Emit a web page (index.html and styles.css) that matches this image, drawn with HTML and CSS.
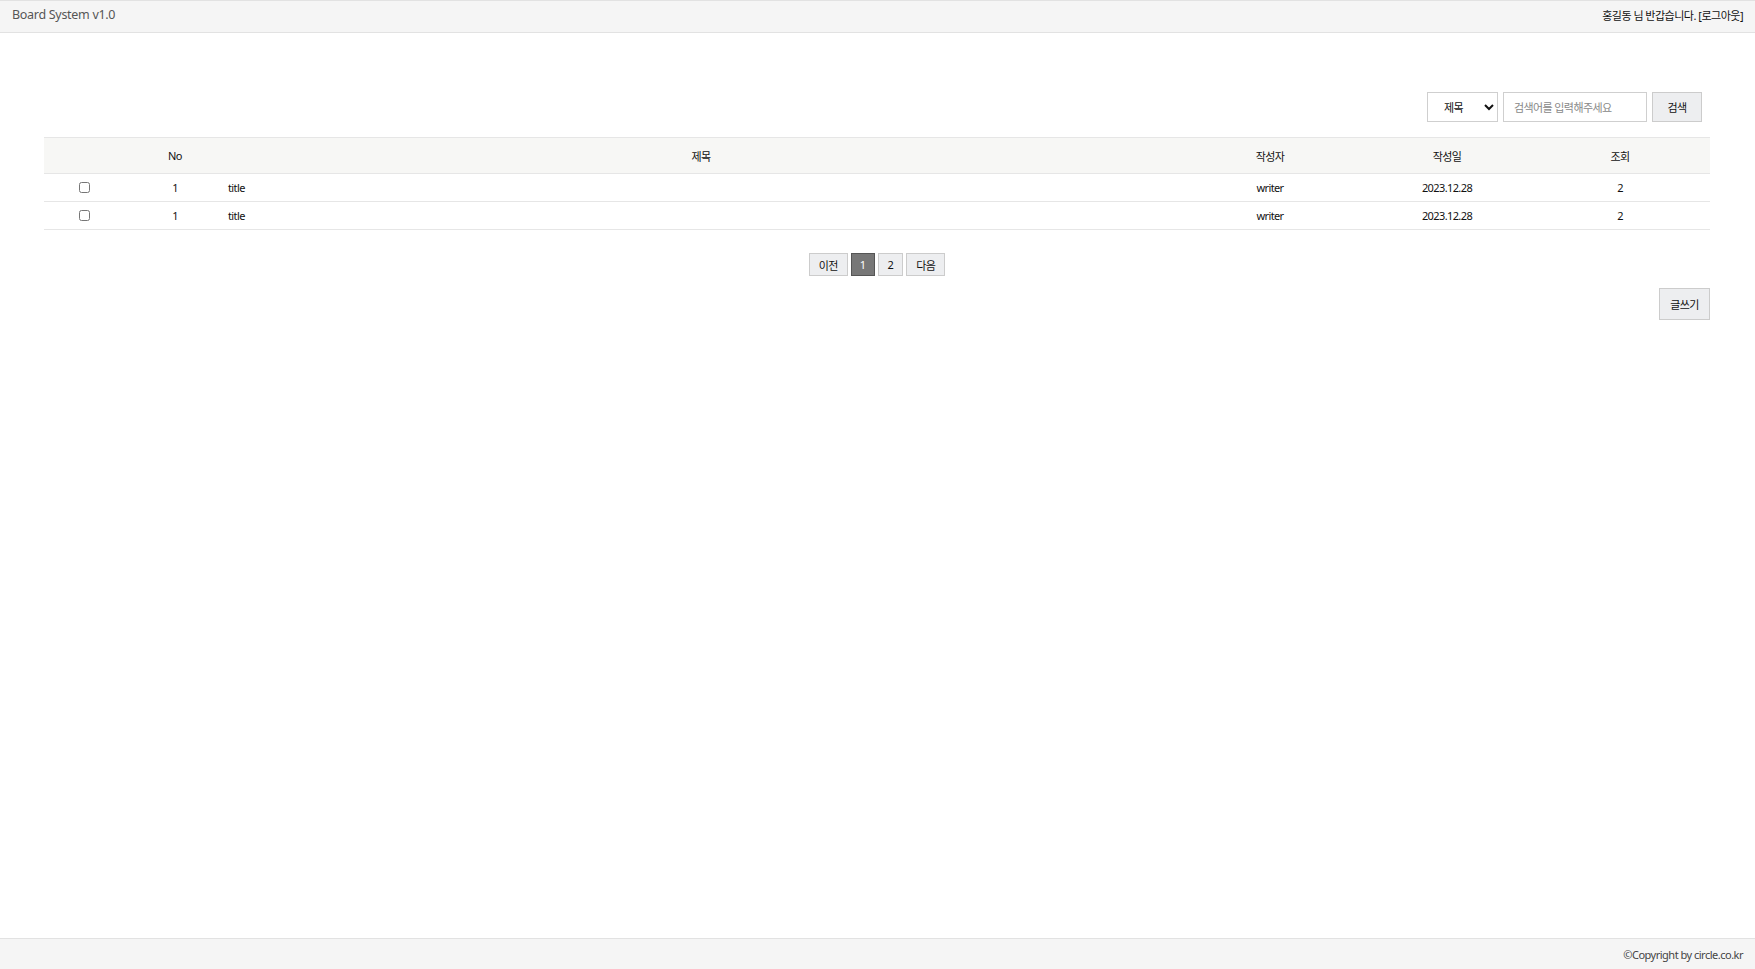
FILE: index.html
```html
<!DOCTYPE html>
<html lang="ko">
<head>
<meta charset="utf-8">
<title>Board System v1.0</title>
<link rel="stylesheet" href="styles.css">
</head>
<body>
<div class="page">
  <header class="topbar">
    <div class="brand">Board System v1.0</div>
    <div class="user">홍길동 님 반갑습니다. <a class="logout">[로그아웃]</a></div>
  </header>
  <main class="content">
    <form class="search">
      <div class="select-wrap">
        <select class="search-select">
          <option>제목</option>
        </select>
      </div>
      <input class="search-input" type="text" placeholder="검색어를 입력해주세요">
      <button class="btn search-btn" type="button">검색</button>
    </form>
    <table class="board">
      <colgroup>
        <col class="c-check"><col class="c-no"><col class="c-title"><col class="c-writer"><col class="c-date"><col class="c-hit">
      </colgroup>
      <thead>
        <tr><th></th><th>No</th><th>제목</th><th>작성자</th><th>작성일</th><th>조회</th></tr>
      </thead>
      <tbody>
        <tr><td><input type="checkbox" class="chk"></td><td>1</td><td class="t-title">title</td><td>writer</td><td>2023.12.28</td><td>2</td></tr>
        <tr><td><input type="checkbox" class="chk"></td><td>1</td><td class="t-title">title</td><td>writer</td><td>2023.12.28</td><td>2</td></tr>
      </tbody>
    </table>
    <nav class="pager">
      <a class="pg">이전</a>
      <a class="pg active">1</a>
      <a class="pg">2</a>
      <a class="pg">다음</a>
    </nav>
    <div class="actions">
      <button class="btn write-btn" type="button">글쓰기</button>
    </div>
  </main>
  <footer class="footer">©Copyright by circle.co.kr</footer>
</div>
</body>
</html>
```

FILE: styles.css
```css
* { box-sizing: border-box; }
html, body { margin: 0; padding: 0; }
body {
  font-family: "Noto Sans", "Noto Sans CJK KR", sans-serif;
  font-size: 11px;
  letter-spacing: -0.6px;
  color: #111;
  background: #fff;
}
.page {
  min-height: 100vh;
  display: flex;
  flex-direction: column;
}
.topbar {
  height: 33px;
  background: #f5f5f5;
  border-top: 1px solid #e2e2e2;
  border-bottom: 1px solid #e2e2e2;
  display: flex;
  align-items: center;
  justify-content: space-between;
  padding: 0 12px 0 12px;
}
.brand {
  font-size: 12.5px;
  letter-spacing: -0.3px;
  color: #555;
  margin-top: -4px;
}
.user {
  font-size: 11px;
  letter-spacing: -0.5px;
  color: #111;
  margin-top: -3px;
}
.logout { color: #111; text-decoration: none; }
.content {
  flex: 1;
  padding: 59px 45px 0 44px;
}
.search {
  display: flex;
  justify-content: flex-end;
  gap: 5px;
  padding-right: 8px;
  margin: 0;
}
.search-select {
  width: 71px;
  height: 30px;
  border: 1px solid #cfcfcf;
  background: #fff;
  font-family: inherit;
  font-size: 11px;
  letter-spacing: -0.6px;
  padding: 0 6px 0 12px;
  color: #111;
  border-radius: 0;
}
.search-input {
  width: 144px;
  height: 30px;
  border: 1px solid #cfcfcf;
  padding: 0 10px;
  font-family: inherit;
  font-size: 11px;
  letter-spacing: -0.6px;
}
.search-input::placeholder { color: #888; }
.btn {
  font-family: inherit;
  font-size: 11px;
  letter-spacing: -0.6px;
  color: #111;
  background: #edeef0;
  border: 1px solid #cccccc;
  border-radius: 0;
  cursor: pointer;
}
.search-btn {
  width: 50px;
  height: 30px;
}
.board {
  width: 100%;
  border-collapse: collapse;
  table-layout: fixed;
  margin-top: 15px;
}
.c-check { width: 80px; }
.c-no { width: 102px; }
.c-title { width: 950px; }
.c-writer { width: 188px; }
.c-date { width: 166px; }
.c-hit { width: 180px; }
.board thead th {
  background: #f7f7f5;
  font-weight: normal;
  height: 36px;
  border-top: 1px solid #e6e6e6;
  text-align: center;
  font-size: 11px;
  padding: 0;
}
.board td {
  height: 28px;
  border-top: 1px solid #e6e6e6;
  text-align: center;
  padding: 0;
  font-size: 11px;
}
.board tbody tr:last-child td { border-bottom: 1px solid #e6e6e6; }
.board td.t-title { text-align: left; padding-left: 2px; }
.chk { margin: 0 0 3px 0; width: 11px; height: 11px; vertical-align: middle; }
.pager {
  display: flex;
  justify-content: center;
  gap: 3px;
  margin-top: 23px;
  padding-left: 0;
}
.pg {
  height: 23px;
  min-width: 23px;
  padding: 0 9px;
  display: flex;
  align-items: center;
  justify-content: center;
  background: #edeef0;
  border: 1px solid #cccccc;
  color: #111;
  font-size: 11px;
}
.pg.active {
  background: #777777;
  border-color: #555;
  color: #fff;
  padding: 0 8px;
}
.actions {
  display: flex;
  justify-content: flex-end;
  margin-top: 12px;
}
.write-btn {
  width: 51px;
  height: 32px;
}
.footer {
  height: 31px;
  background: #f5f5f5;
  border-top: 1px solid #e2e2e2;
  display: flex;
  align-items: center;
  justify-content: flex-end;
  padding-right: 12px;
  font-size: 11px;
  letter-spacing: -0.5px;
  color: #444;
}
```
